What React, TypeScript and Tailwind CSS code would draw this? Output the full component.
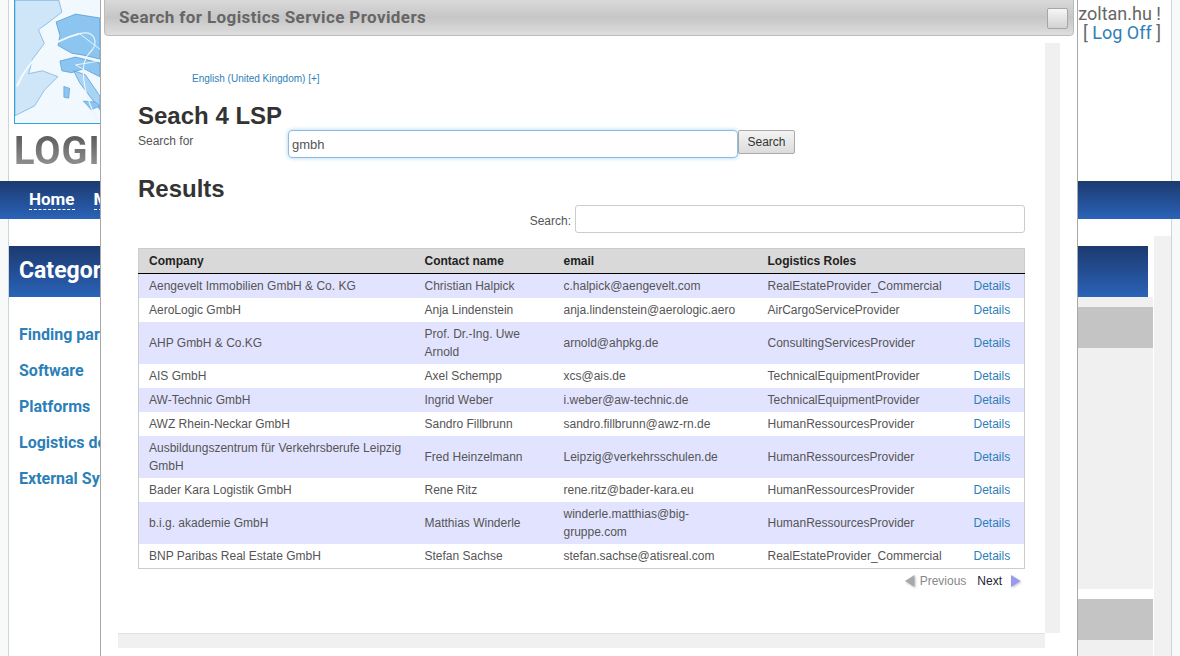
const rows: { company: string; contact: string; email: string; role: string }[] = [
  { company: 'Aengevelt Immobilien GmbH & Co. KG', contact: 'Christian Halpick', email: 'c.halpick@aengevelt.com', role: 'RealEstateProvider_Commercial' },
  { company: 'AeroLogic GmbH', contact: 'Anja Lindenstein', email: 'anja.lindenstein@aerologic.aero', role: 'AirCargoServiceProvider' },
  { company: 'AHP GmbH & Co.KG', contact: 'Prof. Dr.-Ing. Uwe Arnold', email: 'arnold@ahpkg.de', role: 'ConsultingServicesProvider' },
  { company: 'AIS GmbH', contact: 'Axel Schempp', email: 'xcs@ais.de', role: 'TechnicalEquipmentProvider' },
  { company: 'AW-Technic GmbH', contact: 'Ingrid Weber', email: 'i.weber@aw-technic.de', role: 'TechnicalEquipmentProvider' },
  { company: 'AWZ Rhein-Neckar GmbH', contact: 'Sandro Fillbrunn', email: 'sandro.fillbrunn@awz-rn.de', role: 'HumanRessourcesProvider' },
  { company: 'Ausbildungszentrum für Verkehrsberufe Leipzig GmbH', contact: 'Fred Heinzelmann', email: 'Leipzig@verkehrsschulen.de', role: 'HumanRessourcesProvider' },
  { company: 'Bader Kara Logistik GmbH', contact: 'Rene Ritz', email: 'rene.ritz@bader-kara.eu', role: 'HumanRessourcesProvider' },
  { company: 'b.i.g. akademie GmbH', contact: 'Matthias Winderle', email: 'winderle.matthias@big-gruppe.com', role: 'HumanRessourcesProvider' },
  { company: 'BNP Paribas Real Estate GmbH', contact: 'Stefan Sachse', email: 'stefan.sachse@atisreal.com', role: 'RealEstateProvider_Commercial' },
];

const categories = ['Finding partners', 'Software', 'Platforms', 'Logistics documents', 'External Systems'];

const condensed = "font-['Liberation_Sans_Narrow','Roboto',sans-serif]";

function MapLogo() {
  return (
    <svg viewBox="0 0 87 125" className="h-[125px] w-full border border-[#2ba6de] bg-[#f1f9fe]">
      <path d="M0 0H45L48 12L35 22L24 30L30 44L18 60L14 75L28 72L44 78L30 92L20 108L0 118Z" fill="#cfe6f8" stroke="#5a9fd8" strokeWidth="0.6" />
      <path d="M42 22L62 14L87 18V60L70 56L58 54L44 46L46 36Z" fill="#8cc6f0" stroke="#4b94d0" strokeWidth="0.7" />
      <path d="M46 62L62 58L87 64V78L70 70L58 74L48 72Z" fill="#8cc6f0" stroke="#4b94d0" strokeWidth="0.7" />
      <path d="M60 72L72 76L87 98V112L78 100L66 84Z" fill="#a8d4f4" stroke="#4b94d0" strokeWidth="0.7" />
      <path d="M50 88L56 90L55 100L50 99Z" fill="#8cc6f0" stroke="#4b94d0" strokeWidth="0.6" />
      <path d="M70 103L82 104L87 108L78 112Z" fill="#8cc6f0" stroke="#4b94d0" strokeWidth="0.6" />
      <path d="M2 88C14 60 36 42 66 34" fill="none" stroke="#f4fbff" strokeWidth="2" />
      <path d="M66 34C82 30 87 44 76 54C66 64 68 92 84 122" fill="none" stroke="#e8f5fd" strokeWidth="1.2" />
      <path d="M66 34L87 50M62 66L87 62M62 66L87 80" fill="none" stroke="#e8f5fd" strokeWidth="1" />
    </svg>
  );
}

function Background() {
  return (
    <div className={`flex h-full w-full flex-col bg-[#f8fafa] ${condensed}`}>
      <div className="mx-[8px] flex h-[181px] border-x border-[#cbd6d6] bg-white">
        <div className="w-[92px] pl-[5px]">
          <div className="-mt-[1px] w-[87px]">
            <MapLogo />
          </div>
          <div className="mt-[7px] whitespace-nowrap bg-gradient-to-b from-[#555555] to-[#9a9a9a] bg-clip-text text-[38px] font-bold leading-[40px] tracking-[1px] text-transparent">
            LOGIC
          </div>
        </div>
        <div className="flex-1 pr-[10px] pt-[4px] text-right text-[18px] leading-[19px] text-[#666666]">
          <p>Welcome bayzoltan.hu !</p>
          <p>
            [ <span className="text-[#2d7fb8]">Change password</span> ] [ <span className="text-[#2d7fb8]">Log Off</span> ]
          </p>
        </div>
      </div>
      <div className="flex h-[38px] items-center gap-[19px] bg-gradient-to-b from-[#1c3a70] to-[#2a63b8] pl-[29px] text-[17px] font-bold text-white">
        <span className="border-b border-dashed border-white leading-[19px]">Home</span>
        <span className="border-b border-dashed border-white leading-[19px]">MyCompany</span>
      </div>
      <div className="mx-[8px] flex flex-1 border-x border-[#cbd6d6] bg-white">
        <div className="w-[92px] overflow-hidden pt-[27px]">
          <div className="flex h-[51px] items-center bg-gradient-to-b from-[#1c3a70] to-[#2a63b8] pl-[10px] text-[23px] font-bold whitespace-nowrap text-white">
            Categories
          </div>
          <ul className="mt-[27px] flex flex-col gap-[15px] pl-[10px] text-[16px] font-bold leading-[21px] whitespace-nowrap text-[#2d7fb8]">
            {categories.map((c) => (
              <li key={c}>{c}</li>
            ))}
          </ul>
        </div>
        <div className="ml-[976px] flex flex-1 pt-[17px]">
          <div className="flex w-[76px] flex-col pt-[10px]">
            <div className="h-[51px] w-[71px] bg-gradient-to-b from-[#1c3a70] to-[#2a63b8]" />
            <div className="h-[10px] bg-[#f0f0f0]" />
            <div className="h-[41px] bg-[#c4c4c4]" />
            <div className="h-[241px] bg-[#f0f0f0]" />
            <div className="h-[10px] bg-white" />
            <div className="h-[41px] bg-[#c4c4c4]" />
            <div className="flex-1 bg-[#f0f0f0]" />
          </div>
          <div className="ml-[1px] flex-1 bg-[#f1f1f1]" />
        </div>
      </div>
    </div>
  );
}

function Arrow({ dir, color }: { dir: 'left' | 'right'; color: string }) {
  return (
    <svg width="12" height="14" viewBox="0 0 12 14" className="drop-shadow-[1px_1px_1px_rgba(0,0,0,0.25)]">
      <path d={dir === 'left' ? 'M10.5 1V13L1 7Z' : 'M1 1V13L10.5 7Z'} fill={color} />
    </svg>
  );
}

function Modal() {
  return (
    <div className="absolute top-0 left-[100px] flex h-[656px] w-[978px] flex-col border-x border-[#a8a8a8] bg-white font-['Liberation_Sans',Arial,sans-serif] text-[12px] text-[#555555]">
      <div className="relative -mt-[1px] mx-[3px] flex h-[37px] items-center justify-between rounded-b-[4px] border border-[#bcbcbc] bg-gradient-to-b from-[#d9d9d9] via-[#c6c6c6] to-[#dedede] pl-[14px] pr-[5px]">
        <span className={`${condensed} text-[17px] font-bold tracking-[0.4px] text-[#666666]`}>Search for Logistics Service Providers</span>
        <button type="button" aria-label="Close" className="mt-[2px] h-[21px] w-[21px] rounded-[2px] border border-[#a6a6a6] bg-gradient-to-b from-[#f6f6f6] to-[#d2d2d2]" />
      </div>
      <div className="ml-[17px] mr-[17px] mt-[7px] flex h-[605px] flex-col">
        <div className="flex h-[590px]">
          <div className="flex-1 pl-[20px] pr-[20px] pt-[30px]">
            <a className="ml-[54px] block text-[10px] leading-[12px] text-[#2d7fb8]">English (United Kingdom) [+]</a>
            <h2 className="mt-[17px] text-[24px] font-bold leading-[28px] text-[#333333]">Seach 4 LSP</h2>
            <div className="flex items-start">
              <label className="mt-[2px] w-[150px] leading-[18px]">Search for</label>
              <input
                readOnly
                value="gmbh"
                className="h-[28px] w-[450px] rounded-[4px] border border-[#8fbde0] px-[3px] text-[13px] text-[#555555] shadow-[0_0_4px_#9fd3f5] outline-none"
              />
              <button type="button" className="-mt-[0px] h-[24px] w-[57px] rounded-[2px] border border-[#a9a9a9] bg-gradient-to-b from-[#f4f4f4] to-[#dcdcdc] text-[12px] text-[#333333]">
                Search
              </button>
            </div>
            <h2 className="mt-[17px] text-[24px] font-bold leading-[28px] text-[#333333]">Results</h2>
            <div className="mt-[2px] flex items-center justify-end gap-[4px]">
              <span className="mt-[4px]">Search:</span>
              <div className="h-[28px] w-[450px] rounded-[3px] border border-[#cccccc] bg-white" />
            </div>
            <table className="mt-[15px] w-[887px] table-fixed border border-[#cccccc] text-left">
              <colgroup>
                <col className="w-[276px]" />
                <col className="w-[139px]" />
                <col className="w-[204px]" />
                <col className="w-[206px]" />
                <col />
              </colgroup>
              <thead>
                <tr className="h-[25px] border-b border-black bg-[#d9d9d9] text-[#222222]">
                  <th className="px-[10px] font-bold">Company</th>
                  <th className="px-[10px] font-bold">Contact name</th>
                  <th className="px-[10px] font-bold">email</th>
                  <th className="px-[10px] font-bold">Logistics Roles</th>
                  <th />
                </tr>
              </thead>
              <tbody>
                {rows.map((r, i) => (
                  <tr key={r.company} className={i % 2 === 0 ? 'h-[24px] bg-[#e2e4ff]' : 'h-[24px] bg-white'}>
                    <td className="px-[10px] py-[3px] leading-[18px]">{r.company}</td>
                    <td className="px-[10px] py-[3px] leading-[18px]">{r.contact}</td>
                    <td className="px-[10px] py-[3px] leading-[18px]">{r.email}</td>
                    <td className="px-[10px] py-[3px] leading-[18px] whitespace-nowrap">{r.role}</td>
                    <td className="px-[10px] py-[3px] leading-[18px] text-[#2d7fb8]">Details</td>
                  </tr>
                ))}
              </tbody>
            </table>
            <div className="mt-[3px] flex items-center justify-end gap-[4px] pr-[3px]">
              <Arrow dir="left" color="#a8a8a8" />
              <span className="text-[#888888]">Previous</span>
              <span className="ml-[7px] text-[#222233]">Next</span>
              <span className="ml-[4px]"><Arrow dir="right" color="#9999ee" /></span>
            </div>
          </div>
          <div className="w-[15px] bg-[#f0f0f0]" />
        </div>
        <div className="mr-[15px] h-[15px] border-t border-[#e2e2e2] bg-[#f0f0f0]" />
      </div>
    </div>
  );
}

export default function App() {
  return (
    <div className="relative h-[656px] w-[1180px] overflow-hidden">
      <Background />
      <Modal />
    </div>
  );
}
